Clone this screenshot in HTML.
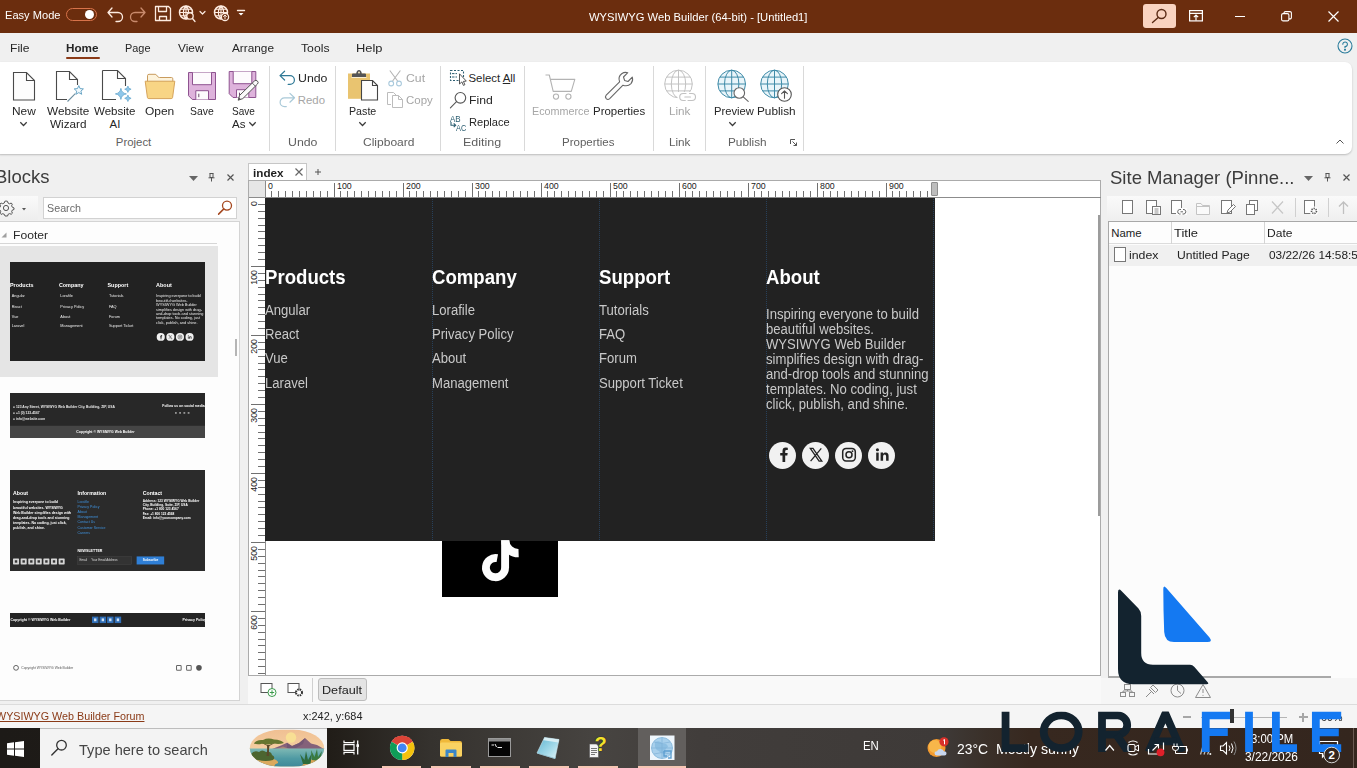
<!DOCTYPE html>
<html><head><meta charset="utf-8"><title>WYSIWYG Web Builder</title>
<style>
*{box-sizing:border-box;margin:0;padding:0}
html,body{width:1357px;height:768px;overflow:hidden;background:#f0f0f0;font-family:"Liberation Sans",sans-serif;font-size:12px;color:#222}
.a{position:absolute}
.t{position:absolute;white-space:nowrap;line-height:normal;transform-origin:0 50%}
svg{position:absolute;overflow:visible}
.ft{position:absolute;white-space:nowrap;line-height:normal;transform-origin:0 50%}

</style></head><body>
<div class="a" style="left:0px;top:0px;width:1357px;height:33px;background:#6b2d0e;"></div>
<span class="t" style="left:5.20px;top:9.38px;font-size:11.4px;color:#fff;transform:scaleX(0.9736);">Easy Mode</span>
<div class="a" style="left:66px;top:8px;width:31px;height:13px;border:1px solid #d8734a;border-radius:7px;"></div>
<div class="a" style="left:85px;top:10px;width:9px;height:9px;background:#fff;border-radius:5px;"></div>
<svg style="left:104px;top:3px" width="150" height="24" viewBox="0 0 150 24" fill="none" stroke="#fdebe0" stroke-width="1.3" stroke-linecap="round" stroke-linejoin="round">
<path d="M8 5 L4 9.5 L8 14 M4 9.5 H14 A4.5 4.5 0 0 1 14 18.5 H12"/>
<path d="M37 5 L41 9.5 L37 14 M41 9.5 H31 A4.5 4.5 0 0 0 31 18.5 H33" stroke="#c98b6d"/>
<path d="M51.5 3.5 H64.5 L66.5 5.5 V17.5 H51.5 Z M54.5 3.5 V8.5 H62.5 V3.5 M55.5 17.5 V13.5 H62.5 V17.5"/>
<circle cx="82" cy="9.5" r="6.5" stroke-width="1.5"/><path d="M75.5 9.5 H88.5 M76.5 6.3 H87.5 M76.5 12.7 H87.5 M82 3 V16 M82 3 C78.5 6 78.5 13 82 16 M82 3 C85.5 6 85.5 13 82 16" stroke-width="1.1"/>
<circle cx="86" cy="13" r="3.2" fill="#6b2d0e"/><path d="M88.5 15.5 L91 18.5"/>
<path d="M96 8.5 L98.5 11 L101 8.5" stroke-width="1.2"/>
<circle cx="117" cy="9.5" r="6.5" stroke-width="1.5"/><path d="M110.5 9.5 H123.5 M111.5 6.3 H122.5 M111.5 12.7 H122.5 M117 3 V16 M117 3 C113.5 6 113.5 13 117 16 M117 3 C120.5 6 120.5 13 117 16" stroke-width="1.1"/>
<circle cx="121" cy="14" r="3.6" fill="#6b2d0e"/><path d="M121 16 V12.2 M119.5 13.5 L121 12 L122.5 13.5" stroke-width="1"/>
<path d="M133.5 7.5 H140.5" stroke-width="1.4"/><path d="M134.5 10 L137 12.5 L139.5 10 Z" fill="#fff" stroke="none"/>
</svg>
<span class="t" style="left:589.20px;top:11.38px;font-size:11.4px;color:#fff;transform:scaleX(0.9842);">WYSIWYG Web Builder (64-bit) - [Untitled1]</span>
<div class="a" style="left:1143px;top:4px;width:33px;height:24px;background:#f9d3c0;border-radius:3px;"></div>
<svg style="left:1143px;top:4px" width="33" height="24" viewBox="0 0 33 24" fill="none" stroke="#5a2a14" stroke-width="1.4" stroke-linecap="round"><circle cx="18.5" cy="10" r="4.5"/><path d="M15.2 13.5 L9.5 18.5"/></svg>
<svg style="left:1189px;top:10px" width="14" height="12" viewBox="0 0 14 12" fill="none" stroke="#fff" stroke-width="1.2"><rect x="0.6" y="0.6" width="12.8" height="10.3"/><path d="M0.6 3.3 H13.4 M7 10.5 V5.2 M4.8 7.2 L7 5 L9.2 7.2"/></svg>
<div class="a" style="left:1235px;top:16px;width:10px;height:1px;background:#fff;"></div>
<svg style="left:1281px;top:11px" width="11" height="11" viewBox="0 0 11 11" fill="none" stroke="#fff" stroke-width="1.1"><rect x="0.6" y="2.6" width="7.3" height="7.3" rx="1.5"/><path d="M3 2.6 V2 A1.4 1.4 0 0 1 4.4 0.6 H9 A1.4 1.4 0 0 1 10.4 2 V6.5 A1.4 1.4 0 0 1 9 7.9 H8"/></svg>
<svg style="left:1328px;top:11px" width="11" height="11" viewBox="0 0 11 11" stroke="#fff" stroke-width="1.2"><path d="M0.5 0.5 L10.5 10.5 M10.5 0.5 L0.5 10.5"/></svg>
<div class="a" style="left:0px;top:33px;width:1357px;height:29px;background:#f0f0f0;"></div>
<span class="t" style="left:10.20px;top:42.38px;font-size:11.4px;color:#262626;transform:scaleX(1.0611);">File</span>
<span class="t" style="left:66.20px;top:42.38px;font-size:11.4px;color:#262626;font-weight:bold;transform:scaleX(1.0261);">Home</span>
<span class="t" style="left:125.20px;top:42.38px;font-size:11.4px;color:#262626;transform:scaleX(0.9576);">Page</span>
<span class="t" style="left:178.20px;top:42.38px;font-size:11.4px;color:#262626;transform:scaleX(1.0407);">View</span>
<span class="t" style="left:231.70px;top:42.38px;font-size:11.4px;color:#262626;transform:scaleX(1.0358);">Arrange</span>
<span class="t" style="left:301.20px;top:42.38px;font-size:11.4px;color:#262626;transform:scaleX(1.0710);">Tools</span>
<span class="t" style="left:356.20px;top:42.38px;font-size:11.4px;color:#262626;transform:scaleX(1.1299);">Help</span>
<div class="a" style="left:66px;top:57px;width:34px;height:2px;background:#8a3a17;border-radius:1px;"></div>
<svg style="left:1337px;top:38px" width="16" height="16" viewBox="0 0 16 16" fill="none" stroke="#2b7d9c" stroke-width="1.1"><circle cx="8" cy="8" r="7"/><path d="M5.8 6.3 A2.3 2.3 0 1 1 8 8.6 V9.8" stroke-linecap="round"/><circle cx="8" cy="11.8" r="0.5" fill="#2b7d9c"/></svg>
<div class="a" style="left:-6px;top:62px;width:1358px;height:92px;background:#fff;border-radius:7px;box-shadow:0 1px 2px rgba(0,0,0,.22);"></div>
<div class="a" style="left:269px;top:66px;width:1px;height:85px;background:#d9d9d9;"></div>
<div class="a" style="left:335px;top:66px;width:1px;height:85px;background:#d9d9d9;"></div>
<div class="a" style="left:440px;top:66px;width:1px;height:85px;background:#d9d9d9;"></div>
<div class="a" style="left:523.5px;top:66px;width:1px;height:85px;background:#d9d9d9;"></div>
<div class="a" style="left:652.5px;top:66px;width:1px;height:85px;background:#d9d9d9;"></div>
<div class="a" style="left:705px;top:66px;width:1px;height:85px;background:#d9d9d9;"></div>
<div class="a" style="left:802.5px;top:66px;width:1px;height:85px;background:#d9d9d9;"></div>
<span class="t" style="left:11.60px;top:105.08px;font-size:11.4px;color:#262626;transform:scaleX(1.0432);">New</span>
<span class="t" style="left:46.70px;top:105.08px;font-size:11.4px;color:#262626;transform:scaleX(1.0324);">Website</span>
<span class="t" style="left:49.70px;top:118.08px;font-size:11.4px;color:#262626;transform:scaleX(1.0290);">Wizard</span>
<span class="t" style="left:94.20px;top:105.08px;font-size:11.4px;color:#262626;transform:scaleX(1.0129);">Website</span>
<span class="t" style="left:109.60px;top:118.08px;font-size:11.4px;color:#262626;">AI</span>
<span class="t" style="left:144.70px;top:105.08px;font-size:11.4px;color:#262626;transform:scaleX(1.0505);">Open</span>
<span class="t" style="left:189.50px;top:105.08px;font-size:11.4px;color:#262626;transform:scaleX(0.9119);">Save</span>
<span class="t" style="left:232.00px;top:105.08px;font-size:11.4px;color:#262626;transform:scaleX(0.8811);">Save</span>
<span class="t" style="left:232.20px;top:118.08px;font-size:11.4px;color:#262626;transform:scaleX(1.0139);">As</span>
<span class="t" style="left:348.80px;top:105.08px;font-size:11.4px;color:#262626;transform:scaleX(0.9362);">Paste</span>
<span class="t" style="left:531.60px;top:105.08px;font-size:11.4px;color:#a6a6a6;transform:scaleX(0.9460);">Ecommerce</span>
<span class="t" style="left:592.90px;top:105.08px;font-size:11.4px;color:#262626;transform:scaleX(1.0050);">Properties</span>
<span class="t" style="left:668.80px;top:105.08px;font-size:11.4px;color:#a6a6a6;transform:scaleX(1.0275);">Link</span>
<span class="t" style="left:713.60px;top:105.08px;font-size:11.4px;color:#262626;transform:scaleX(0.9844);">Preview</span>
<span class="t" style="left:756.50px;top:105.08px;font-size:11.4px;color:#262626;transform:scaleX(1.0354);">Publish</span>
<span class="t" style="left:297.80px;top:72.08px;font-size:11.4px;color:#262626;transform:scaleX(1.0825);">Undo</span>
<span class="t" style="left:297.80px;top:94.08px;font-size:11.4px;color:#a6a6a6;">Redo</span>
<span class="t" style="left:405.60px;top:72.08px;font-size:11.4px;color:#a6a6a6;transform:scaleX(1.0760);">Cut</span>
<span class="t" style="left:405.60px;top:94.08px;font-size:11.4px;color:#a6a6a6;transform:scaleX(1.0071);">Copy</span>
<span class="t" style="left:468.50px;top:72.08px;font-size:11.4px;color:#262626;">Select <u>A</u>ll</span>
<span class="t" style="left:468.50px;top:94.08px;font-size:11.4px;color:#262626;transform:scaleX(1.0726);">Find</span>
<span class="t" style="left:468.50px;top:115.98px;font-size:11.4px;color:#262626;transform:scaleX(0.9733);">Replace</span>
<span class="t" style="left:115.80px;top:135.98px;font-size:11.4px;color:#5f5f5f;">Project</span>
<span class="t" style="left:287.90px;top:135.98px;font-size:11.4px;color:#5f5f5f;transform:scaleX(1.0825);">Undo</span>
<span class="t" style="left:362.80px;top:135.98px;font-size:11.4px;color:#5f5f5f;transform:scaleX(1.0557);">Clipboard</span>
<span class="t" style="left:463.20px;top:135.98px;font-size:11.4px;color:#5f5f5f;transform:scaleX(1.0958);">Editing</span>
<span class="t" style="left:561.50px;top:135.98px;font-size:11.4px;color:#5f5f5f;transform:scaleX(1.0108);">Properties</span>
<span class="t" style="left:668.80px;top:135.98px;font-size:11.4px;color:#5f5f5f;transform:scaleX(1.0275);">Link</span>
<span class="t" style="left:727.60px;top:135.98px;font-size:11.4px;color:#5f5f5f;transform:scaleX(1.0354);">Publish</span>
<svg style="left:19.5px;top:122px" width="7" height="4" viewBox="0 0 7 4" fill="none" stroke="#3a3a3a" stroke-width="1.25"><path d="M0.3 0.3 L3.5 3.5 L6.7 0.3"/></svg>
<svg style="left:358.9px;top:122px" width="7" height="4" viewBox="0 0 7 4" fill="none" stroke="#3a3a3a" stroke-width="1.25"><path d="M0.3 0.3 L3.5 3.5 L6.7 0.3"/></svg>
<svg style="left:729px;top:122px" width="7" height="4" viewBox="0 0 7 4" fill="none" stroke="#3a3a3a" stroke-width="1.25"><path d="M0.3 0.3 L3.5 3.5 L6.7 0.3"/></svg>
<svg style="left:248.5px;top:122px" width="7" height="4" viewBox="0 0 7 4" fill="none" stroke="#3a3a3a" stroke-width="1.25"><path d="M0.3 0.3 L3.5 3.5 L6.7 0.3"/></svg>
<svg style="left:1336px;top:139px" width="8" height="5" viewBox="0 0 8 5" fill="none" stroke="#555" stroke-width="1"><path d="M0.5 4.5 L4 1 L7.5 4.5"/></svg>
<svg style="left:790px;top:139px" width="7" height="7" viewBox="0 0 7 7" fill="none" stroke="#555" stroke-width="1"><path d="M0.5 5 V0.5 H5 M2.5 2.5 L6.5 6.5 M6.5 3.5 V6.5 H3.5"/></svg>
<svg style="left:0px;top:0px" width="300" height="160" viewBox="0 0 300 160" fill="none" stroke="#4a4a4a" stroke-width="1.1">
<path d="M13.5 72.5 H26.5 L34.5 80.5 V100 H13.5 Z M26.5 72.5 V80.5 H34.5" fill="#fdfdfd"/>
<path d="M67 99.5 H56.5 V71.5 H69.5 L77.5 79.5 V85 M69.5 71.5 V79.5 H77.5" />
<path d="M102.5 70.5 H117.5 L125.5 78.5 V86 M117.5 70.5 V78.5 H125.5 M116 99.5 H102.5 V70.5"/>
</svg>
<svg style="left:0px;top:0px" width="300" height="160" viewBox="0 0 300 160" fill="none">
<path d="M67.5 101.5 L75.3 93.7" stroke="#6f8fa0" stroke-width="1.1"/>
<path d="M78.8 85.6 L80.1 88.6 L83.4 88.9 L80.9 91.1 L81.7 94.3 L78.8 92.6 L75.9 94.3 L76.7 91.1 L74.2 88.9 L77.5 88.6 Z" fill="#f2f9fd" stroke="#6aa6c6" stroke-width="1"/>
<path d="M120.9 88.4 Q121.6 93.2 126.4 93.9 Q121.6 94.6 120.9 99.4 Q120.2 94.6 115.4 93.9 Q120.2 93.2 120.9 88.4 Z" fill="#8fc7ea" stroke="#64a6cc" stroke-width="0.8"/>
<path d="M127.9 86 Q128.3 88.8 131.1 89.2 Q128.3 89.6 127.9 92.4 Q127.5 89.6 124.7 89.2 Q127.5 88.8 127.9 86 Z" fill="#8fc7ea" stroke="#64a6cc" stroke-width="0.7"/>
<path d="M127.9 95.1 Q128.3 97.9 131.1 98.3 Q128.3 98.7 127.9 101.5 Q127.5 98.7 124.7 98.3 Q127.5 97.9 127.9 95.1 Z" fill="#8fc7ea" stroke="#64a6cc" stroke-width="0.7"/>
</svg>
<svg style="left:0px;top:0px" width="300" height="160" viewBox="0 0 300 160" fill="none">
<path d="M147.5 82 V75.7 Q147.5 74.3 149 74.3 H155 Q156 74.3 156.6 75.1 L158 76.9 Q158.5 77.5 159.5 77.5 H171.5 Q172.8 77.5 172.8 78.8 V82 Z" fill="#fdf3dc" stroke="#c99c5e" stroke-width="1"/>
<path d="M145.2 81.2 H174.8 L172.6 97.4 Q172.4 98.6 171.2 98.6 H148.8 Q147.6 98.6 147.4 97.4 Z" fill="#f8d585" stroke="#d6a45c" stroke-width="1"/>
</svg>
<svg style="left:0px;top:0px" width="300" height="160" viewBox="0 0 300 160" fill="none"><path d="M188.5 72.5 H215.5 V99.5 H192.3 L188.5 95.7 Z" fill="#deb3dc" stroke="#8e5390" stroke-width="1"/><path d="M192.5 72.5 V84.7 H211.5 V72.5" fill="#fdfbfd" stroke="#8e5390" stroke-width="1"/><path d="M195.8 99.5 V90.7 H208.5 V99.5" fill="#fdfbfd" stroke="#8e5390" stroke-width="1"/><path d="M198.8 93.7 V97.2" stroke="#6a4a6c" stroke-width="1"/><path d="M229.2 71.5 H255.8 V97.5 H233 L229.2 93.7 Z" fill="#deb3dc" stroke="#8e5390" stroke-width="1"/><path d="M233.2 71.5 V83.7 H251.8 V71.5" fill="#fdfbfd" stroke="#8e5390" stroke-width="1"/><path d="M236.5 97.5 V89.7 H248.8 V97.5" fill="#fdfbfd" stroke="#8e5390" stroke-width="1"/><path d="M239.5 92.7 V96.2" stroke="#6a4a6c" stroke-width="1"/><path d="M238.2 100.2 L239.6 95.4 L254.4 81 Q256 79.6 257.5 81.1 Q258.9 82.6 257.4 84.1 L242.8 98.6 Z" fill="#fbfbfb" stroke="#555" stroke-width="1"/><path d="M252.3 83.1 L255.4 86.2" stroke="#555" stroke-width="0.9"/><path d="M238.2 100.2 L240.9 99.3 L239.1 97.5 Z" fill="#555"/></svg>
<svg style="left:0px;top:0px" width="700" height="160" viewBox="0 0 700 160" fill="none" stroke-width="1.2" stroke-linecap="round" stroke-linejoin="round">
<path d="M284.6 71.2 L280 75.6 L284.6 80 M280.3 75.6 H290 A4.4 4.4 0 0 1 290 84.4 H288.2" stroke="#2f7996"/>
<path d="M289.9 93.4 L294.5 97.8 L289.9 102.2 M294.2 97.8 H284.5 A4.4 4.4 0 0 0 284.5 106.6 H286.3" stroke="#a9c9d8"/>
</svg>
<svg style="left:0px;top:0px" width="700" height="160" viewBox="0 0 700 160" fill="none">
<rect x="348" y="73.5" width="22" height="25.3" fill="#e9c470"/>
<path d="M352 77 V74.6 Q352 73.6 353 73.6 H356.2 Q356.6 70 359 70 Q361.4 70 361.8 73.6 H365 Q366 73.6 366 74.6 V77 Z" fill="#555"/><circle cx="359" cy="72.6" r="1" fill="#f5e6c0"/>
<rect x="351.5" y="77" width="15" height="1" fill="#f7ecd2"/>
<path d="M361.5 80.5 H372.5 L377.5 85.5 V100 H361.5 Z" fill="#fdfdfd" stroke="#444" stroke-width="1.1"/><path d="M372.5 80.5 V85.5 H377.5" fill="none" stroke="#444" stroke-width="1.1"/>
</svg>
<svg style="left:0px;top:0px" width="700" height="160" viewBox="0 0 700 160" fill="none">
<path d="M389.8 70.5 L397.6 81 M400.4 70.5 L392.6 81" stroke="#b4b4b4" stroke-width="1.1"/>
<circle cx="391.2" cy="83.5" r="2.4" stroke="#a9c9dc" stroke-width="1.1"/><circle cx="399" cy="83.5" r="2.4" stroke="#a9c9dc" stroke-width="1.1"/>
<path d="M391 104.5 H387.5 V92.5 H393.5 L396 95" stroke="#bcbcbc" stroke-width="1"/>
<path d="M392.5 95.5 H398.5 L402.5 99.5 V107.5 H392.5 Z M398.5 95.5 V99.5 H402.5" stroke="#bcbcbc" stroke-width="1" fill="#fff"/>
</svg>
<svg style="left:0px;top:0px" width="700" height="160" viewBox="0 0 700 160" fill="none">
<rect x="450.5" y="70.5" width="13" height="10" stroke="#2d5f72" stroke-width="1.1" stroke-dasharray="2 1.5"/>
<path d="M452 73.6 H457 M452 77 H457" stroke="#2d5f72" stroke-width="1" stroke-dasharray="2.5 1"/>
<path d="M459.5 73.8 V84 L461.9 81.9 L463.4 85.4 L464.9 84.7 L463.4 81.4 L466.3 81.1 Z" fill="#fff" stroke="#444" stroke-width="0.9" stroke-linejoin="round"/>
<circle cx="460.4" cy="97.8" r="5.3" stroke="#555" stroke-width="1.1"/><path d="M456.5 101.7 L450.4 107.8" stroke="#555" stroke-width="1.1" stroke-linecap="round"/>
<path d="M451 122 V125.2 H455.5 M453.7 123.3 L455.7 125.2 L453.7 127.1" stroke="#2d5f72" stroke-width="1.1"/>
</svg>
<svg style="left:0px;top:0px" width="700" height="160" viewBox="0 0 700 160" fill="none">
<path d="M545.5 75 H549.3 L553.2 91.4 H571.3 L574.8 79.4 H550.4" stroke="#b3b3b3" stroke-width="1.1" stroke-linejoin="round"/>
<circle cx="556" cy="96.6" r="2.6" stroke="#b3b3b3" stroke-width="1.1"/><circle cx="568.4" cy="96.6" r="2.6" stroke="#b3b3b3" stroke-width="1.1"/>
<path d="M606.2 95.2 L619.6 81.8 Q617.7 76.7 621.7 73.7 Q624.5 71.7 627.8 72.7 L623.5 77 L624.6 80.4 L628 81.5 L632.3 77.2 Q633.4 80.8 631 83.6 Q627.8 86.9 623 85.2 L609.7 98.7 Q607.9 100.3 606.2 98.6 Q604.7 96.9 606.2 95.2 Z" stroke="#666" stroke-width="1.1" stroke-linejoin="round" fill="#fdfdfd"/>
</svg>
<svg style="left:0px;top:0px" width="900" height="160" viewBox="0 0 900 160" fill="none" stroke-width="1"><circle cx="678.5" cy="84" r="13.8" fill="#fff" stroke="#c2c2c2"/><path d="M678.5 70.2 V97.8 M664.7 84 H692.3 M666.494 77.1 H690.506 M666.494 90.9 H690.506" stroke="#c2c2c2"/><ellipse cx="678.5" cy="84" rx="7.176" ry="13.8" stroke="#c2c2c2"/><rect x="677.5" y="92" width="19.5" height="10" fill="#fff" stroke="none"/><path d="M686 93.5 H683.2 A3.5 3.5 0 0 0 683.2 100.5 H685.3 M688 100.5 H692 A3.5 3.5 0 0 0 692 93.5 H689.5 M684.8 97 H690.5" stroke="#c2c2c2" stroke-width="1.1" stroke-linecap="round"/><circle cx="731.7" cy="84" r="13.8" fill="#e9f5fa" stroke="#3f8ba8"/><path d="M731.7 70.2 V97.8 M717.9 84 H745.5 M719.694 77.1 H743.706 M719.694 90.9 H743.706" stroke="#3f8ba8"/><ellipse cx="731.7" cy="84" rx="7.176" ry="13.8" stroke="#3f8ba8"/><circle cx="739.3" cy="93" r="5.3" fill="#fff" stroke="#666" stroke-width="1.1"/><path d="M743.2 96.9 L748.2 101.3" stroke="#666" stroke-width="1.1" stroke-linecap="round"/><circle cx="774.5" cy="84" r="13.8" fill="#e9f5fa" stroke="#3f8ba8"/><path d="M774.5 70.2 V97.8 M760.7 84 H788.3 M762.494 77.1 H786.506 M762.494 90.9 H786.506" stroke="#3f8ba8"/><ellipse cx="774.5" cy="84" rx="7.176" ry="13.8" stroke="#3f8ba8"/><circle cx="784.5" cy="94.5" r="6.8" fill="#fff" stroke="#555" stroke-width="1.1"/><path d="M784.5 98.3 V91 M781.6 93.7 L784.5 90.8 L787.4 93.7" stroke="#555" stroke-width="1.1" stroke-linecap="round" stroke-linejoin="round"/></svg>
<span class="t" style="left:449.71px;top:113.90px;font-size:8.4px;color:#2d5f72;transform:scaleX(0.9557);">AB</span>
<span class="t" style="left:456.41px;top:122.90px;font-size:8.4px;color:#2d5f72;transform:scaleX(0.8841);">AC</span>
<span class="t" style="left:-4.83px;top:165.91px;font-size:19px;color:#3c3c3c;transform:scaleX(0.9732);">Blocks</span>
<svg style="left:188.5px;top:176px" width="9" height="5" viewBox="0 0 9 5" fill="none"><path d="M0 0 H9 L4.5 5 Z" fill="#666"/></svg>
<svg style="left:208px;top:173px" width="7" height="9" viewBox="0 0 7 9" fill="none"><path d="M1.5 0.5 H5.5 M2 0.5 V4.5 H5 V0.5 M0.5 4.8 H6.5 M3.5 5 V8.5" stroke="#555" stroke-width="1" fill="none"/></svg>
<svg style="left:227px;top:174px" width="7" height="7" viewBox="0 0 7 7" fill="none"><path d="M0.5 0.5 L6.5 6.5 M6.5 0.5 L0.5 6.5" stroke="#555" stroke-width="1.2"/></svg>
<div class="a" style="left:0px;top:196px;width:38px;height:24px;background:linear-gradient(#fafafa,#eeeeee);"></div>
<svg style="left:-2px;top:200px" width="16" height="16" viewBox="0 0 16 16" fill="none"><circle cx="8" cy="8" r="2.6" stroke="#555" fill="none"/><path d="M8 1 L9.5 1.3 L10 3 L11.6 3.8 L13.2 3 L14.3 4.2 L13.6 5.8 L14.4 7.3 L16 7.9 L16 9.5 L14.3 10.1 L13.7 11.6 L14.4 13.2 L13.2 14.3 L11.7 13.6 L10.1 14.3 L9.6 16 H7 L6.3 14.3 L4.7 13.7 L3.1 14.4 L2 13.2 L2.7 11.6 L2 10 L0.3 9.5 V7.9 L2 7.3 L2.6 5.7 L1.9 4.2 L3.1 3 L4.7 3.7 L6.3 3 L6.8 1.3 Z" stroke="#555" fill="none" stroke-width="1"/></svg>
<svg style="left:21.5px;top:208px" width="4" height="3" viewBox="0 0 4 3" fill="none"><path d="M0 0 H4 L2 2.5 Z" fill="#555"/></svg>
<div class="a" style="left:42.5px;top:197px;width:194px;height:22px;background:#fff;border:1px solid #d2d2d2;"></div>
<span class="t" style="left:46.69px;top:201.00px;font-size:11.6px;color:#6b6b6b;transform:scaleX(0.9258);">Search</span>
<svg style="left:216px;top:199px" width="18" height="18" viewBox="0 0 18 18" fill="none"><circle cx="11" cy="6.6" r="4.5" stroke="#a5481f" stroke-width="1.3" fill="none"/><path d="M7.8 9.9 L2.6 15.1" stroke="#a5481f" stroke-width="1.5" stroke-linecap="round"/></svg>
<div class="a" style="left:-1px;top:221px;width:241px;height:480px;background:#fdfdfd;border:1px solid #d4d4d4;"></div>
<svg style="left:1px;top:232px" width="6" height="6" viewBox="0 0 6 6" fill="none"><path d="M5.5 0.5 V5.5 H0.5 Z" fill="#a0a0a0"/></svg>
<span class="t" style="left:12.59px;top:228.00px;font-size:11.6px;color:#2a2a2a;transform:scaleX(1.0475);">Footer</span>
<div class="a" style="left:0px;top:243px;width:217px;height:1px;background:#d6d6d6;"></div>
<div class="a" style="left:0px;top:246px;width:218px;height:131px;background:#e5e5e5;"></div>
<div class="a" style="left:234.5px;top:339px;width:2px;height:17px;background:#b5b5b5;"></div>
<div class="a" style="left:10px;top:262px;width:195px;height:99px;overflow:hidden;background:#222;filter:blur(0.35px)"><div class="a" style="left:0px;top:-0.4px;width:670px;height:343px;background:#222222;overflow:hidden;transform-origin:0 0;transform:scale(0.29104);"><div class="a" style="left:0px;top:0px;width:670px;height:343px">
<span class="ft" style="left:0.3px;top:69.33px;font-size:19.3px;font-weight:bold;color:#fff;width:80.2px;transform:scaleX(.965)">Products</span>
<span class="ft" style="left:167.8px;top:69.33px;font-size:19.3px;font-weight:bold;color:#fff;width:85px;transform:scaleX(.965)">Company</span>
<span class="ft" style="left:334.6px;top:69.33px;font-size:19.3px;font-weight:bold;color:#fff;width:72px;transform:scaleX(.965)">Support</span>
<span class="ft" style="left:501.6px;top:69.33px;font-size:19.3px;font-weight:bold;color:#fff;width:54px;transform:scaleX(.965)">About</span>
<span class="ft" style="left:5.8px;top:107.01px;font-size:13.8px;color:#ececec;transform:scaleX(.95)">Angular</span>
<span class="ft" style="left:5.8px;top:144.91px;font-size:13.8px;color:#ececec;transform:scaleX(.95)">React</span>
<span class="ft" style="left:5.8px;top:179.41px;font-size:13.8px;color:#ececec;transform:scaleX(.95)">Vue</span>
<span class="ft" style="left:5.8px;top:212.91px;font-size:13.8px;color:#ececec;transform:scaleX(.95)">Laravel</span>
<span class="ft" style="left:173.3px;top:107.01px;font-size:13.8px;color:#ececec;transform:scaleX(.95)">Lorafile</span>
<span class="ft" style="left:173.3px;top:144.91px;font-size:13.8px;color:#ececec;transform:scaleX(.95)">Privacy Policy</span>
<span class="ft" style="left:173.3px;top:179.41px;font-size:13.8px;color:#ececec;transform:scaleX(.95)">About</span>
<span class="ft" style="left:173.3px;top:212.91px;font-size:13.8px;color:#ececec;transform:scaleX(.95)">Management</span>
<span class="ft" style="left:340.1px;top:107.01px;font-size:13.8px;color:#ececec;transform:scaleX(.95)">Tutorials</span>
<span class="ft" style="left:340.1px;top:144.91px;font-size:13.8px;color:#ececec;transform:scaleX(.95)">FAQ</span>
<span class="ft" style="left:340.1px;top:179.41px;font-size:13.8px;color:#ececec;transform:scaleX(.95)">Forum</span>
<span class="ft" style="left:340.1px;top:212.91px;font-size:13.8px;color:#ececec;transform:scaleX(.95)">Support Ticket</span>
<span class="ft" style="left:501.6px;top:109.41px;font-size:13.8px;color:#ececec;transform:scaleX(.95)">Inspiring everyone to build</span>
<span class="ft" style="left:501.6px;top:124.46px;font-size:13.8px;color:#ececec;transform:scaleX(.95)">beautiful websites.</span>
<span class="ft" style="left:501.6px;top:139.51px;font-size:13.8px;color:#ececec;transform:scaleX(.95)">WYSIWYG Web Builder</span>
<span class="ft" style="left:501.6px;top:154.56px;font-size:13.8px;color:#ececec;transform:scaleX(.95)">simplifies design with drag-</span>
<span class="ft" style="left:501.6px;top:169.61px;font-size:13.8px;color:#ececec;transform:scaleX(.95)">and-drop tools and stunning</span>
<span class="ft" style="left:501.6px;top:184.66px;font-size:13.8px;color:#ececec;transform:scaleX(.95)">templates. No coding, just</span>
<span class="ft" style="left:501.6px;top:199.71px;font-size:13.8px;color:#ececec;transform:scaleX(.95)">click, publish, and shine.</span>
<div class="a" style="left:504.4px;top:244.1px;width:27.2px;height:27.2px;border-radius:50%;background:#f1f1f1"></div>
<div class="a" style="left:537.4px;top:244.1px;width:27.2px;height:27.2px;border-radius:50%;background:#f1f1f1"></div>
<div class="a" style="left:570.4px;top:244.1px;width:27.2px;height:27.2px;border-radius:50%;background:#f1f1f1"></div>
<div class="a" style="left:603.4px;top:244.1px;width:27.2px;height:27.2px;border-radius:50%;background:#f1f1f1"></div>
<svg style="left:0;top:0" width="670" height="343" viewBox="0 0 670 343"><path d="M520.2 265 V258.5 H522.3 L522.7 255.9 H520.2 V254.3 Q520.2 253 521.6 253 H522.8 V250.7 Q521.8 250.5 520.8 250.5 Q517.5 250.5 517.5 253.9 V255.9 H515.2 V258.5 H517.5 V265 Z" fill="#222"/><path d="M545.3 251.3 H548 L556.8 264.1 H554.1 Z M556.3 251.3 L545.6 264.1" fill="none" stroke="#222" stroke-width="1.3"/><rect x="577.7" y="251.4" width="12.6" height="12.6" rx="3.4" fill="none" stroke="#222" stroke-width="1.5"/><circle cx="584" cy="257.7" r="3" fill="none" stroke="#222" stroke-width="1.5"/><circle cx="587.5" cy="254.2" r="0.9" fill="#222"/><rect x="611.2" y="255.6" width="2.5" height="8.1" fill="#222"/><circle cx="612.45" cy="252.7" r="1.55" fill="#222"/><path d="M615.6 255.6 H618 V256.8 Q618.9 255.4 620.7 255.4 Q623.6 255.4 623.6 258.9 V263.7 H621.1 V259.4 Q621.1 257.6 619.7 257.6 Q618.1 257.6 618.1 259.5 V263.7 H615.6 Z" fill="#222"/></svg>
</div></div></div>
<div class="a" style="left:10px;top:393px;width:195px;height:45px;overflow:hidden;background:#282828;filter:blur(0.3px)"><div class="a" style="left:0;top:0;width:970px;height:223.881px;transform-origin:0 0;transform:scale(0.201)"><div class="a" style="left:0;top:163px;width:970px;height:62px;background:#454545"></div><span class="ft" style="left:15px;top:58px;font-size:16.5px;color:#e8e8e8;font-weight:bold;">&#9679; 123 Any Street, WYSIWYG Web Builder City, Building, ZIP, USA</span><span class="ft" style="left:15px;top:90px;font-size:16.5px;color:#e8e8e8;font-weight:bold;">&#9679; +1 (0) 123-4567</span><span class="ft" style="left:15px;top:121px;font-size:16.5px;color:#e8e8e8;font-weight:bold;">&#9679; info@website.com</span><span class="ft" style="left:758px;top:54px;font-size:17px;color:#fff;font-weight:bold;">Follow us on social media</span><span class="ft" style="left:820px;top:90px;font-size:18px;color:#9a9a9a;font-weight:bold;">&#9632;&nbsp; &#9632;&nbsp; &#9632;&nbsp; &#9632;</span><span class="ft" style="left:330px;top:184px;font-size:17px;color:#fff;font-weight:bold;">Copyright &copy; WYSIWYG Web Builder</span></div></div>
<div class="a" style="left:10px;top:470.3px;width:195px;height:100.5px;overflow:hidden;background:#2b2b2b;filter:blur(0.3px)"><div class="a" style="left:0;top:0;width:970px;height:500px;transform-origin:0 0;transform:scale(0.201)"><span class="ft" style="left:15px;top:100px;font-size:26px;color:#fff;font-weight:bold;">About</span><span class="ft" style="left:336px;top:100px;font-size:26px;color:#fff;font-weight:bold;">Information</span><span class="ft" style="left:660px;top:100px;font-size:26px;color:#fff;font-weight:bold;">Contact</span><span class="ft" style="left:15px;top:150px;font-size:17.5px;color:#fff;font-weight:bold;">Inspiring everyone to build</span><span class="ft" style="left:15px;top:176px;font-size:17.5px;color:#fff;font-weight:bold;">beautiful websites. WYSIWYG</span><span class="ft" style="left:15px;top:202px;font-size:17.5px;color:#fff;font-weight:bold;">Web Builder simplifies design with</span><span class="ft" style="left:15px;top:228px;font-size:17.5px;color:#fff;font-weight:bold;">drag-and-drop tools and stunning</span><span class="ft" style="left:15px;top:254px;font-size:17.5px;color:#fff;font-weight:bold;">templates. No coding, just click,</span><span class="ft" style="left:15px;top:280px;font-size:17.5px;color:#fff;font-weight:bold;">publish, and shine.</span><span class="ft" style="left:336px;top:148px;font-size:17.5px;color:#3f93df;">Lorafile</span><span class="ft" style="left:336px;top:173.5px;font-size:17.5px;color:#3f93df;">Privacy Policy</span><span class="ft" style="left:336px;top:199px;font-size:17.5px;color:#3f93df;">About</span><span class="ft" style="left:336px;top:224.5px;font-size:17.5px;color:#3f93df;">Management</span><span class="ft" style="left:336px;top:250px;font-size:17.5px;color:#3f93df;">Contact Us</span><span class="ft" style="left:336px;top:275.5px;font-size:17.5px;color:#3f93df;">Customer Service</span><span class="ft" style="left:336px;top:301px;font-size:17.5px;color:#3f93df;">Careers</span><span class="ft" style="left:660px;top:146px;font-size:16px;color:#fff;font-weight:bold;">Address: 123 WYSIWYG Web Builder</span><span class="ft" style="left:660px;top:166.5px;font-size:16px;color:#fff;font-weight:bold;">City, Building, Suite, ZIP, USA</span><span class="ft" style="left:660px;top:187px;font-size:16px;color:#fff;font-weight:bold;">Phone: +1 800 123 4567</span><span class="ft" style="left:660px;top:207.5px;font-size:16px;color:#fff;font-weight:bold;">Fax: +1 800 123 4568</span><span class="ft" style="left:660px;top:228px;font-size:16px;color:#fff;font-weight:bold;">Email: info@yourcompany.com</span><span class="ft" style="left:336px;top:392px;font-size:18px;color:#fff;font-weight:bold;">NEWSLETTER</span><div class="a" style="left:15px;top:440px;width:30px;height:30px;background:#d5d5d5;border-radius:3px"></div><div class="a" style="left:24px;top:449px;width:12px;height:12px;background:#333"></div><div class="a" style="left:52.8px;top:440px;width:30px;height:30px;background:#d5d5d5;border-radius:3px"></div><div class="a" style="left:61.8px;top:449px;width:12px;height:12px;background:#333"></div><div class="a" style="left:90.6px;top:440px;width:30px;height:30px;background:#d5d5d5;border-radius:3px"></div><div class="a" style="left:99.6px;top:449px;width:12px;height:12px;background:#333"></div><div class="a" style="left:128.4px;top:440px;width:30px;height:30px;background:#d5d5d5;border-radius:3px"></div><div class="a" style="left:137.4px;top:449px;width:12px;height:12px;background:#333"></div><div class="a" style="left:166.2px;top:440px;width:30px;height:30px;background:#d5d5d5;border-radius:3px"></div><div class="a" style="left:175.2px;top:449px;width:12px;height:12px;background:#333"></div><div class="a" style="left:204px;top:440px;width:30px;height:30px;background:#d5d5d5;border-radius:3px"></div><div class="a" style="left:213px;top:449px;width:12px;height:12px;background:#333"></div><div class="a" style="left:241.8px;top:440px;width:30px;height:30px;background:#d5d5d5;border-radius:3px"></div><div class="a" style="left:250.8px;top:449px;width:12px;height:12px;background:#333"></div><div class="a" style="left:336px;top:430px;width:270px;height:40px;background:#333;border:2px solid #4a4a4a"></div><span class="ft" style="left:346px;top:441px;font-size:15px;color:#ddd;">Email &nbsp; &nbsp; Your Email Address</span><div class="a" style="left:630px;top:430px;width:137px;height:40px;background:#2f7fd6"></div><span class="ft" style="left:660px;top:441px;font-size:16px;color:#fff;font-weight:bold;">Subscribe</span></div></div>
<div class="a" style="left:10px;top:613px;width:195px;height:14px;overflow:hidden;background:#242424;filter:blur(0.3px)"><div class="a" style="left:0;top:0;width:970px;height:69.6517px;transform-origin:0 0;transform:scale(0.201)"><span class="ft" style="left:2px;top:22px;font-size:17.5px;color:#fff;font-weight:bold;">Copyright &copy; WYSIWYG Web Builder</span><div class="a" style="left:408px;top:18px;width:32px;height:32px;background:#2f6db5"></div><div class="a" style="left:418px;top:27px;width:12px;height:14px;background:#cfe0f2"></div><div class="a" style="left:445.5px;top:18px;width:32px;height:32px;background:#2f6db5"></div><div class="a" style="left:455.5px;top:27px;width:12px;height:14px;background:#cfe0f2"></div><div class="a" style="left:483px;top:18px;width:32px;height:32px;background:#2f6db5"></div><div class="a" style="left:493px;top:27px;width:12px;height:14px;background:#cfe0f2"></div><div class="a" style="left:520.5px;top:18px;width:32px;height:32px;background:#2f6db5"></div><div class="a" style="left:530.5px;top:27px;width:12px;height:14px;background:#cfe0f2"></div><span class="ft" style="left:858px;top:25px;font-size:17.5px;color:#fff;font-weight:bold;">Privacy Policy</span></div></div>
<div class="a" style="left:10px;top:662.5px;width:195px;height:10px;overflow:hidden;background:transparent;filter:blur(0.3px)"><div class="a" style="left:0;top:0;width:970px;height:49.7512px;transform-origin:0 0;transform:scale(0.201)"><div class="a" style="left:16px;top:10px;width:28px;height:28px;border:4px solid #444;border-radius:50%"></div><span class="ft" style="left:56px;top:14px;font-size:17px;color:#555;">Copyright WYSIWYG Web Builder</span><div class="a" style="left:826px;top:10px;width:28px;height:28px;border:5px solid #666;border-radius:6px"></div><div class="a" style="left:876px;top:10px;width:28px;height:28px;border:5px solid #666;border-radius:6px"></div><div class="a" style="left:926px;top:10px;width:28px;height:28px;background:#555;border-radius:50%"></div></div></div>
<div class="a" style="left:248px;top:162.5px;width:59px;height:19px;background:#fff;border:1px solid #c6c6c6;border-bottom:none;"></div>
<span class="t" style="left:253.19px;top:166.10px;font-size:11.6px;color:#1e1e1e;font-weight:bold;transform:scaleX(1.0075);">index</span>
<svg style="left:294.5px;top:168px" width="8" height="8" viewBox="0 0 8 8" fill="none"><path d="M0.5 0.5 L7.5 7.5 M7.5 0.5 L0.5 7.5" stroke="#666" stroke-width="1.2"/></svg>
<svg style="left:315px;top:169px" width="6" height="6" viewBox="0 0 6 6" fill="none"><path d="M0 3 H6 M3 0 V6" stroke="#555" stroke-width="1"/></svg>
<div class="a" style="left:248px;top:180px;width:853px;height:496px;background:#fff;border:1px solid #ababab;"></div>
<div class="a" style="left:249px;top:181px;width:16px;height:16.5px;background:#e6e6e6;"></div>
<svg style="left:0px;top:0px" width="1357" height="768" viewBox="0 0 1357 768" fill="none"><path d="M265.0 183 V197 M271.9 191 V197 M278.8 191 V197 M285.7 191 V197 M292.6 191 V197 M299.5 191 V197 M306.4 191 V197 M313.3 191 V197 M320.2 191 V197 M327.1 191 V197 M334.0 183 V197 M340.9 191 V197 M347.8 191 V197 M354.7 191 V197 M361.6 191 V197 M368.5 191 V197 M375.4 191 V197 M382.3 191 V197 M389.2 191 V197 M396.1 191 V197 M403.0 183 V197 M409.9 191 V197 M416.8 191 V197 M423.7 191 V197 M430.6 191 V197 M437.5 191 V197 M444.4 191 V197 M451.3 191 V197 M458.2 191 V197 M465.1 191 V197 M472.0 183 V197 M478.9 191 V197 M485.8 191 V197 M492.7 191 V197 M499.6 191 V197 M506.5 191 V197 M513.4 191 V197 M520.3 191 V197 M527.2 191 V197 M534.1 191 V197 M541.0 183 V197 M547.9 191 V197 M554.8 191 V197 M561.7 191 V197 M568.6 191 V197 M575.5 191 V197 M582.4 191 V197 M589.3 191 V197 M596.2 191 V197 M603.1 191 V197 M610.0 183 V197 M616.9 191 V197 M623.8 191 V197 M630.7 191 V197 M637.6 191 V197 M644.5 191 V197 M651.4 191 V197 M658.3 191 V197 M665.2 191 V197 M672.1 191 V197 M679.0 183 V197 M685.9 191 V197 M692.8 191 V197 M699.7 191 V197 M706.6 191 V197 M713.5 191 V197 M720.4 191 V197 M727.3 191 V197 M734.2 191 V197 M741.1 191 V197 M748.0 183 V197 M754.9 191 V197 M761.8 191 V197 M768.7 191 V197 M775.6 191 V197 M782.5 191 V197 M789.4 191 V197 M796.3 191 V197 M803.2 191 V197 M810.1 191 V197 M817.0 183 V197 M823.9 191 V197 M830.8 191 V197 M837.7 191 V197 M844.6 191 V197 M851.5 191 V197 M858.4 191 V197 M865.3 191 V197 M872.2 191 V197 M879.1 191 V197 M886.0 183 V197 M892.9 191 V197 M899.8 191 V197 M906.7 191 V197 M913.6 191 V197 M920.5 191 V197 M927.4 191 V197 M251 197.4 H265 M258 204.3 H265 M258 211.2 H265 M258 218.1 H265 M258 225.0 H265 M258 231.9 H265 M258 238.8 H265 M258 245.7 H265 M258 252.6 H265 M258 259.5 H265 M251 266.4 H265 M258 273.3 H265 M258 280.2 H265 M258 287.1 H265 M258 294.0 H265 M258 300.9 H265 M258 307.8 H265 M258 314.7 H265 M258 321.6 H265 M258 328.5 H265 M251 335.4 H265 M258 342.3 H265 M258 349.2 H265 M258 356.1 H265 M258 363.0 H265 M258 369.9 H265 M258 376.8 H265 M258 383.7 H265 M258 390.6 H265 M258 397.5 H265 M251 404.4 H265 M258 411.3 H265 M258 418.2 H265 M258 425.1 H265 M258 432.0 H265 M258 438.9 H265 M258 445.8 H265 M258 452.7 H265 M258 459.6 H265 M258 466.5 H265 M251 473.4 H265 M258 480.3 H265 M258 487.2 H265 M258 494.1 H265 M258 501.0 H265 M258 507.9 H265 M258 514.8 H265 M258 521.7 H265 M258 528.6 H265 M258 535.5 H265 M251 542.4 H265 M258 549.3 H265 M258 556.2 H265 M258 563.1 H265 M258 570.0 H265 M258 576.9 H265 M258 583.8 H265 M258 590.7 H265 M258 597.6 H265 M258 604.5 H265 M251 611.4 H265 M258 618.3 H265 M258 625.2 H265 M258 632.1 H265 M258 639.0 H265 M258 645.9 H265 M258 652.8 H265 M258 659.7 H265 M258 666.6 H265 M258 673.5 H265" stroke="#707070" stroke-width="1" fill="none" shape-rendering="crispEdges"/></svg>
<div class="a" style="left:249px;top:197px;width:852px;height:1px;background:#8c8c8c;"></div>
<div class="a" style="left:264.5px;top:181px;width:1px;height:494px;background:#8c8c8c;"></div>
<span class="t" style="left:268.00px;top:180.94px;font-size:8.8px;color:#222;">0</span>
<span class="t" style="left:337.00px;top:180.94px;font-size:8.8px;color:#222;">100</span>
<span class="t" style="left:406.00px;top:180.94px;font-size:8.8px;color:#222;">200</span>
<span class="t" style="left:475.00px;top:180.94px;font-size:8.8px;color:#222;">300</span>
<span class="t" style="left:544.00px;top:180.94px;font-size:8.8px;color:#222;">400</span>
<span class="t" style="left:613.00px;top:180.94px;font-size:8.8px;color:#222;">500</span>
<span class="t" style="left:682.00px;top:180.94px;font-size:8.8px;color:#222;">600</span>
<span class="t" style="left:751.00px;top:180.94px;font-size:8.8px;color:#222;">700</span>
<span class="t" style="left:820.00px;top:180.94px;font-size:8.8px;color:#222;">800</span>
<span class="t" style="left:889.00px;top:180.94px;font-size:8.8px;color:#222;">900</span>
<span class="t" style="left:248.5px;top:201px;font-size:8.8px;color:#222;transform-origin:0 0;transform:rotate(-90deg) translate(-100%,0)">0</span>
<span class="t" style="left:248.5px;top:270px;font-size:8.8px;color:#222;transform-origin:0 0;transform:rotate(-90deg) translate(-100%,0)">100</span>
<span class="t" style="left:248.5px;top:339px;font-size:8.8px;color:#222;transform-origin:0 0;transform:rotate(-90deg) translate(-100%,0)">200</span>
<span class="t" style="left:248.5px;top:408px;font-size:8.8px;color:#222;transform-origin:0 0;transform:rotate(-90deg) translate(-100%,0)">300</span>
<span class="t" style="left:248.5px;top:477px;font-size:8.8px;color:#222;transform-origin:0 0;transform:rotate(-90deg) translate(-100%,0)">400</span>
<span class="t" style="left:248.5px;top:546px;font-size:8.8px;color:#222;transform-origin:0 0;transform:rotate(-90deg) translate(-100%,0)">500</span>
<span class="t" style="left:248.5px;top:615px;font-size:8.8px;color:#222;transform-origin:0 0;transform:rotate(-90deg) translate(-100%,0)">600</span>
<div class="a" style="left:265px;top:198px;width:670px;height:343px;background:#222222;overflow:hidden;transform-origin:0 0;"><div class="a" style="left:-0.4px;top:-0.6px;width:670px;height:343px">
<div class="a" style="left:167.3px;top:0;width:0;height:343px;border-left:1px dotted #27405a"></div>
<div class="a" style="left:334.1px;top:0;width:0;height:343px;border-left:1px dotted #27405a"></div>
<div class="a" style="left:501.1px;top:0;width:0;height:343px;border-left:1px dotted #27405a"></div>
<div class="a" style="left:668.5px;top:0;width:0;height:343px;border-left:1px dotted #27405a"></div>
<span class="ft" style="left:0.3px;top:69.33px;font-size:19.3px;font-weight:bold;color:#fff;width:80.2px;transform:scaleX(.965)">Products</span>
<span class="ft" style="left:167.8px;top:69.33px;font-size:19.3px;font-weight:bold;color:#fff;width:85px;transform:scaleX(.965)">Company</span>
<span class="ft" style="left:334.6px;top:69.33px;font-size:19.3px;font-weight:bold;color:#fff;width:72px;transform:scaleX(.965)">Support</span>
<span class="ft" style="left:501.6px;top:69.33px;font-size:19.3px;font-weight:bold;color:#fff;width:54px;transform:scaleX(.965)">About</span>
<span class="ft" style="left:0.3px;top:105.81px;font-size:13.8px;color:#c9c9c9;transform:scaleX(.95)">Angular</span>
<span class="ft" style="left:0.3px;top:129.51px;font-size:13.8px;color:#c9c9c9;transform:scaleX(.95)">React</span>
<span class="ft" style="left:0.3px;top:153.71px;font-size:13.8px;color:#c9c9c9;transform:scaleX(.95)">Vue</span>
<span class="ft" style="left:0.3px;top:178.51px;font-size:13.8px;color:#c9c9c9;transform:scaleX(.95)">Laravel</span>
<span class="ft" style="left:167.8px;top:105.81px;font-size:13.8px;color:#c9c9c9;transform:scaleX(.95)">Lorafile</span>
<span class="ft" style="left:167.8px;top:129.51px;font-size:13.8px;color:#c9c9c9;transform:scaleX(.95)">Privacy Policy</span>
<span class="ft" style="left:167.8px;top:153.71px;font-size:13.8px;color:#c9c9c9;transform:scaleX(.95)">About</span>
<span class="ft" style="left:167.8px;top:178.51px;font-size:13.8px;color:#c9c9c9;transform:scaleX(.95)">Management</span>
<span class="ft" style="left:334.6px;top:105.81px;font-size:13.8px;color:#c9c9c9;transform:scaleX(.95)">Tutorials</span>
<span class="ft" style="left:334.6px;top:129.51px;font-size:13.8px;color:#c9c9c9;transform:scaleX(.95)">FAQ</span>
<span class="ft" style="left:334.6px;top:153.71px;font-size:13.8px;color:#c9c9c9;transform:scaleX(.95)">Forum</span>
<span class="ft" style="left:334.6px;top:178.51px;font-size:13.8px;color:#c9c9c9;transform:scaleX(.95)">Support Ticket</span>
<span class="ft" style="left:501.6px;top:109.41px;font-size:13.8px;color:#c9c9c9;transform:scaleX(.95)">Inspiring everyone to build</span>
<span class="ft" style="left:501.6px;top:124.46px;font-size:13.8px;color:#c9c9c9;transform:scaleX(.95)">beautiful websites.</span>
<span class="ft" style="left:501.6px;top:139.51px;font-size:13.8px;color:#c9c9c9;transform:scaleX(.95)">WYSIWYG Web Builder</span>
<span class="ft" style="left:501.6px;top:154.56px;font-size:13.8px;color:#c9c9c9;transform:scaleX(.95)">simplifies design with drag-</span>
<span class="ft" style="left:501.6px;top:169.61px;font-size:13.8px;color:#c9c9c9;transform:scaleX(.95)">and-drop tools and stunning</span>
<span class="ft" style="left:501.6px;top:184.66px;font-size:13.8px;color:#c9c9c9;transform:scaleX(.95)">templates. No coding, just</span>
<span class="ft" style="left:501.6px;top:199.71px;font-size:13.8px;color:#c9c9c9;transform:scaleX(.95)">click, publish, and shine.</span>
<div class="a" style="left:504.4px;top:244.1px;width:27.2px;height:27.2px;border-radius:50%;background:#f1f1f1"></div>
<div class="a" style="left:537.4px;top:244.1px;width:27.2px;height:27.2px;border-radius:50%;background:#f1f1f1"></div>
<div class="a" style="left:570.4px;top:244.1px;width:27.2px;height:27.2px;border-radius:50%;background:#f1f1f1"></div>
<div class="a" style="left:603.4px;top:244.1px;width:27.2px;height:27.2px;border-radius:50%;background:#f1f1f1"></div>
<svg style="left:0;top:0" width="670" height="343" viewBox="0 0 670 343"><path d="M520.2 265 V258.5 H522.3 L522.7 255.9 H520.2 V254.3 Q520.2 253 521.6 253 H522.8 V250.7 Q521.8 250.5 520.8 250.5 Q517.5 250.5 517.5 253.9 V255.9 H515.2 V258.5 H517.5 V265 Z" fill="#222"/><path d="M545.3 251.3 H548 L556.8 264.1 H554.1 Z M556.3 251.3 L545.6 264.1" fill="none" stroke="#222" stroke-width="1.3"/><rect x="577.7" y="251.4" width="12.6" height="12.6" rx="3.4" fill="none" stroke="#222" stroke-width="1.5"/><circle cx="584" cy="257.7" r="3" fill="none" stroke="#222" stroke-width="1.5"/><circle cx="587.5" cy="254.2" r="0.9" fill="#222"/><rect x="611.2" y="255.6" width="2.5" height="8.1" fill="#222"/><circle cx="612.45" cy="252.7" r="1.55" fill="#222"/><path d="M615.6 255.6 H618 V256.8 Q618.9 255.4 620.7 255.4 Q623.6 255.4 623.6 258.9 V263.7 H621.1 V259.4 Q621.1 257.6 619.7 257.6 Q618.1 257.6 618.1 259.5 V263.7 H615.6 Z" fill="#222"/></svg>
</div></div>
<div class="a" style="left:442px;top:541px;width:115.5px;height:55.6px;background:#000;"></div>
<svg style="left:0px;top:0px" width="1357" height="768" viewBox="0 0 1357 768" fill="none"><path d="M505.1 540.3 V568" stroke="#fdfdfd" stroke-width="7.9" fill="none"/><path d="M505.1 567.7 A9.6 9.6 0 1 1 497.3 558.2" stroke="#fdfdfd" stroke-width="7.8" fill="none"/><path d="M505.3 540.3 A12.9 12.9 0 0 0 518.6 553.2" stroke="#fdfdfd" stroke-width="8.2" fill="none"/></svg>
<div class="a" style="left:931px;top:182px;width:6.5px;height:14px;background:#bdbdbd;border:1px solid #8f8f8f;border-radius:1px;"></div>
<div class="a" style="left:1097.5px;top:215px;width:2px;height:301px;background:#9c9c9c;"></div>
<div class="a" style="left:248px;top:676px;width:853px;height:28px;background:#f9f9f9;"></div>
<svg style="left:260px;top:682px" width="18" height="16" viewBox="0 0 18 16" fill="none"><rect x="1" y="1.5" width="11" height="9" stroke="#555" fill="#fff" stroke-width="1"/><circle cx="12" cy="10.5" r="4" fill="#fff" stroke="#3a9a4a" stroke-width="1"/><path d="M12 8.3 V12.7 M9.8 10.5 H14.2" stroke="#3a9a4a" stroke-width="1"/></svg>
<svg style="left:287px;top:682px" width="18" height="16" viewBox="0 0 18 16" fill="none"><rect x="1" y="1.5" width="11" height="9" stroke="#555" fill="#fff" stroke-width="1"/><circle cx="12" cy="10.5" r="3" fill="#fff" stroke="#333" stroke-width="2" stroke-dasharray="1.5 0.900000"/></svg>
<div class="a" style="left:311.5px;top:678px;width:1px;height:24px;background:#d0d0d0;"></div>
<div class="a" style="left:317.5px;top:678px;width:49px;height:23px;background:#e4e4e4;border:1px solid #bdbdbd;border-radius:3px;"></div>
<span class="t" style="left:321.69px;top:683.20px;font-size:11.6px;color:#222;transform:scaleX(1.0891);">Default</span>
<span class="t" style="left:1110.17px;top:166.50px;font-size:19px;color:#3c3c3c;transform:scaleX(0.9758);">Site Manager (Pinne...</span>
<svg style="left:1303.5px;top:176px" width="9" height="5" viewBox="0 0 9 5" fill="none"><path d="M0 0 H9 L4.5 5 Z" fill="#666"/></svg>
<svg style="left:1324px;top:173px" width="7" height="9" viewBox="0 0 7 9" fill="none"><path d="M1.5 0.5 H5.5 M2 0.5 V4.5 H5 V0.5 M0.5 4.8 H6.5 M3.5 5 V8.5" stroke="#555" stroke-width="1" fill="none"/></svg>
<svg style="left:1342.5px;top:174px" width="7" height="7" viewBox="0 0 7 7" fill="none"><path d="M0.5 0.5 L6.5 6.5 M6.5 0.5 L0.5 6.5" stroke="#555" stroke-width="1.2"/></svg>
<div class="a" style="left:1107px;top:196px;width:250px;height:24px;background:linear-gradient(#fafafa,#efefef);"></div>
<svg style="left:0px;top:0px" width="1357" height="768" viewBox="0 0 1357 768" fill="none"><rect x="1122.5" y="200.5" width="10" height="13" fill="#fff" stroke="#777" stroke-width="1"/><rect x="1146.5" y="200.5" width="10" height="13" fill="#fff" stroke="#777" stroke-width="1"/><rect x="1152.5" y="206.5" width="8" height="8" fill="#fff" stroke="#777"/><path d="M1154.5 209 H1158.5 M1154.5 211 H1158.5 M1154.5 213 H1158.5" stroke="#777" stroke-width="0.8"/><rect x="1171.5" y="200.5" width="10" height="13" fill="#fff" stroke="#777" stroke-width="1"/><rect x="1176" y="208" width="11" height="7" fill="#fdfdfd" stroke="none"/><path d="M1181 209.5 H1179.5 A2.3 2.3 0 0 0 1179.5 214 H1180.5 M1182.5 214 H1184 A2.3 2.3 0 0 0 1184 209.5 H1183 M1180.5 211.8 H1183" stroke="#666" stroke-width="1" fill="none"/><path d="M1196.5 203.5 H1201 L1202.5 205.5 H1209.5 V214.5 H1196.5 Z M1196.5 206.5 H1209.5" fill="#fafafa" stroke="#c4c4c4" stroke-width="1"/><rect x="1221.5" y="200.5" width="10" height="13" fill="#fff" stroke="#777" stroke-width="1"/><path d="M1227 213 L1228 210 L1233.5 204.5 L1235.5 206.5 L1230 212 Z" fill="#fff" stroke="#666" stroke-width="0.9"/><rect x="1249.5" y="200.5" width="8" height="10" fill="#fff" stroke="#777"/><rect x="1246.5" y="204.5" width="8" height="10" fill="#fff" stroke="#777"/><path d="M1272 201.5 L1283 213.5 M1283 201.5 L1272 213.5" stroke="#c6c6c6" stroke-width="1.2"/><path d="M1295.5 198 V217" stroke="#d0d0d0"/><rect x="1304.5" y="200.5" width="10" height="13" fill="#fff" stroke="#777" stroke-width="1"/><circle cx="1314" cy="211" r="4.5" fill="#fdfdfd" stroke="none"/><circle cx="1314" cy="211" r="2.5" fill="none" stroke="#555" stroke-width="1.6" stroke-dasharray="1.3 0.9"/><path d="M1328.5 198 V217" stroke="#d0d0d0"/><path d="M1343.5 214 V202 M1339 206.5 L1343.5 202 L1348 206.5" stroke="#c0c0c0" stroke-width="1.3" fill="none"/></svg>
<div class="a" style="left:1107.5px;top:221px;width:252px;height:457px;background:#fcfcfc;border:1px solid #a8a8a8;border-bottom:none;"></div>
<div class="a" style="left:1107.5px;top:676px;width:223px;height:2px;background:#a9a9a9;"></div>
<div class="a" style="left:1108.5px;top:222px;width:250px;height:22px;background:#fdfdfd;border-bottom:1px solid #dcdcdc;"></div>
<div class="a" style="left:1170.5px;top:222px;width:1px;height:22px;background:#d4d4d4;"></div>
<div class="a" style="left:1263.5px;top:222px;width:1px;height:22px;background:#d4d4d4;"></div>
<span class="t" style="left:1111.20px;top:226.88px;font-size:11.4px;color:#222;">Name</span>
<span class="t" style="left:1174.20px;top:226.88px;font-size:11.4px;color:#222;transform:scaleX(1.1361);">Title</span>
<span class="t" style="left:1267.20px;top:226.88px;font-size:11.4px;color:#222;transform:scaleX(1.0590);">Date</span>
<div class="a" style="left:1108.5px;top:244.5px;width:250px;height:21px;background:#f0f0f0;"></div>
<svg style="left:1114px;top:247px" width="12" height="15" viewBox="0 0 12 15" fill="none"><rect x="0.5" y="0.5" width="11" height="14" fill="#fff" stroke="#777"/></svg>
<span class="t" style="left:1129.20px;top:248.88px;font-size:11.4px;color:#222;transform:scaleX(1.0825);">index</span>
<span class="t" style="left:1176.50px;top:248.88px;font-size:11.4px;color:#222;transform:scaleX(1.0642);">Untitled Page</span>
<span class="t" style="left:1269.20px;top:248.88px;font-size:11.4px;color:#222;transform:scaleX(1.0396);">03/22/26 14:58:59</span>
<div class="a" style="left:1101px;top:678px;width:256px;height:26px;background:#f6f6f6;"></div>
<svg style="left:0px;top:0px" width="1357" height="768" viewBox="0 0 1357 768" fill="none"><rect x="1124.5" y="684.5" width="6" height="5" fill="none" stroke="#8c8c8c"/><rect x="1120.5" y="692.5" width="5" height="4" fill="none" stroke="#8c8c8c"/><rect x="1129.5" y="692.5" width="5" height="4" fill="none" stroke="#8c8c8c"/><path d="M1127.5 689.5 V691 M1123 692.5 V691 H1132 V692.5" stroke="#8c8c8c" fill="none"/><path d="M1153 685 L1158 690 L1155.5 692.5 L1150.5 687.5 Z M1151.5 691.5 L1146 697 M1149 689 L1154 694" stroke="#8c8c8c" fill="none" stroke-width="1"/><circle cx="1177.5" cy="690.5" r="6.5" fill="none" stroke="#8c8c8c"/><path d="M1177.5 685.5 V690.5 L1181 693.5" stroke="#8c8c8c" fill="none"/><path d="M1203 684.5 L1210.5 697.5 H1195.5 Z" fill="none" stroke="#8c8c8c"/><path d="M1203 689 V693" stroke="#8c8c8c"/><circle cx="1203" cy="695.3" r="0.6" fill="#999"/></svg>
<div class="a" style="left:0px;top:704px;width:1357px;height:24px;background:#f5f5f5;border-top:1px solid #dcdcdc;"></div>
<span class="t" style="left:-3.80px;top:709.98px;font-size:11.4px;color:#8a3a17;transform:scaleX(0.9433);text-decoration:underline;">WYSIWYG Web Builder Forum</span>
<span class="t" style="left:303.20px;top:709.98px;font-size:11.4px;color:#222;transform:scaleX(0.9584);">x:242, y:684</span>
<div class="a" style="left:1183px;top:716px;width:8px;height:2px;background:#a6a6a6;"></div>
<div class="a" style="left:1201px;top:717px;width:86px;height:1px;background:#b5b5b5;"></div>
<div class="a" style="left:1298.5px;top:716px;width:9px;height:2px;background:#a6a6a6;"></div>
<div class="a" style="left:1302px;top:712.5px;width:2px;height:9px;background:#a6a6a6;"></div>
<span class="t" style="left:1321.23px;top:710.75px;font-size:11px;color:#222;transform:scaleX(0.9727);">69%</span>
<div class="a" style="left:0px;top:728px;width:1357px;height:40px;background:linear-gradient(90deg,#1d1a17 0,#211d18 330px,#35322e 430px,#474441 600px,#413d3b 700px,#3e3a38 940px,#3a3029 985px,#37281f 1030px,#34261e 1357px);"></div>
<svg style="left:6.5px;top:740.5px" width="17" height="16" viewBox="0 0 17 16" fill="none"><path d="M0 2.3 L7 1.3 V7.5 H0 Z M8 1.2 L17 0 V7.5 H8 Z M0 8.5 H7 V14.7 L0 13.7 Z M8 8.5 H17 V16 L8 14.8 Z" fill="#fff"/></svg>
<div class="a" style="left:39.5px;top:728px;width:287.5px;height:40px;background:#f3f3f3;border-top:1px solid #bdbdbd;"></div>
<svg style="left:50px;top:738px" width="18" height="18" viewBox="0 0 18 18" fill="none"><circle cx="11.5" cy="7.2" r="4.8" stroke="#333" stroke-width="1.3" fill="none"/><path d="M8 10.7 L1.8 17" stroke="#333" stroke-width="1.4" stroke-linecap="round"/></svg>
<span class="t" style="left:78.55px;top:741.12px;font-size:15px;color:#454545;transform:scaleX(0.9711);">Type here to search</span>
<svg style="left:0px;top:0px" width="1357" height="768" viewBox="0 0 1357 768" fill="none"><defs><clipPath id="lc"><rect x="249.8" y="729.8" width="74.4" height="36.8" rx="31" ry="18.4"/></clipPath>
<linearGradient id="sky" x1="0" y1="0" x2="0" y2="1"><stop offset="0" stop-color="#f0bf92"/><stop offset="1" stop-color="#f8dcae"/></linearGradient>
<linearGradient id="lake" x1="0" y1="0" x2="0" y2="1"><stop offset="0" stop-color="#7fb9b4"/><stop offset="0.5" stop-color="#4f9aa3"/><stop offset="1" stop-color="#3c8596"/></linearGradient></defs>
<g clip-path="url(#lc)">
<rect x="249" y="729" width="77" height="39" fill="url(#sky)"/>
<circle cx="291" cy="737.5" r="5.2" fill="#f8df94"/>
<path d="M272 749 L281 745.5 L287 742.8 L292 746 L299 743 L305 738 L311 743.5 L317 745 L324 749 Z" fill="#84617a"/>
<path d="M287 742.8 L292 746 L299 743 L305 738 L303 744 L296 748 L287 748 Z" fill="#6d5170" opacity="0.7"/>
<path d="M276 749 L283 746.5 L289 749 Z" fill="#a98377"/>
<rect x="249" y="748.5" width="77" height="20" fill="url(#lake)"/>
<path d="M249 757 Q262 755 270 758 Q279 760 278 763 Q270 766 280 768 H249 Z" fill="#dba95e"/>
<path d="M300 768 Q306 759 318 758 L326 756 V768 Z" fill="#d9a458"/>
<path d="M251 754 Q254 750 259 752 Q262 749 266 752 Q271 751 272 755 Q276 757 273 760 Q266 762 258 760 Q251 760 251 754 Z" fill="#4c6530"/>
<path d="M267 745 Q267.5 750 266.5 756 H269.2 Q268.5 750 269.5 745 Z" fill="#5a4a2a"/>
<path d="M268 746 L262 742.5 M268.5 746 L275 742.5" stroke="#5a4a2a" stroke-width="0.8"/>
<path d="M254 743.5 Q256 739.5 263 740 Q268 737.5 274 739.5 Q281 739.5 284 743 Q279 744.5 274 743.5 Q268 745.5 262 743.8 Q257 745 254 743.5 Z" fill="#66762f"/>
<path d="M303 764 L300 754 L304.5 760 L306 751 L308 760 L312 753 L310.5 764 Z" fill="#2f6b3c"/>
<path d="M312 760 L311 750 L314.5 757 L317 749 L318 757 L322 751 L320 761 Z" fill="#3a7a40"/>
</g></svg>
<svg style="left:342.5px;top:740px" width="17" height="15" viewBox="0 0 17 15" fill="none"><path d="M1 0.6 V2.6 H11 V0.6 M1 14.4 V12.4 H11 V14.4" stroke="#fff" stroke-width="1.2" fill="none"/><rect x="1" y="4.6" width="10" height="5.8" stroke="#fff" stroke-width="1.2" fill="none"/><path d="M14.7 0.6 V14.4" stroke="#fff" stroke-width="1.3"/><rect x="13.4" y="4.3" width="2.6" height="2.6" fill="#fff"/></svg>
<svg style="left:0px;top:0px" width="1357" height="768" viewBox="0 0 1357 768" fill="none"><circle cx="402.2" cy="747.9" r="12.2" fill="#fff"/>
<path d="M402.2 747.9 L391.63 741.8 A12.2 12.2 0 0 1 412.77 741.8 Z" fill="#db4437"/>
<path d="M402.2 747.9 L412.77 741.8 A12.2 12.2 0 0 1 402.2 760.1 Z" fill="#f4c20d"/>
<path d="M402.2 747.9 L402.2 760.1 A12.2 12.2 0 0 1 391.63 741.8 Z" fill="#0f9d58"/>
<path d="M391.63 741.8 A12.2 12.2 0 0 1 412.77 741.8 L402.2 741.8 Z" fill="#db4437"/>
<circle cx="402.2" cy="747.9" r="5.6" fill="#fff"/><circle cx="402.2" cy="747.9" r="4.4" fill="#4285f4"/></svg>
<svg style="left:0px;top:0px" width="1357" height="768" viewBox="0 0 1357 768" fill="none"><path d="M440 741.5 Q440 739 442 739 H448.5 L450.5 741 H460 Q462 741 462 743 V755 Q462 756.5 460.5 756.5 H441.5 Q440 756.5 440 755 Z" fill="#f0b93a"/>
<path d="M440 744 Q440 742.5 441.5 742.5 H460.5 Q462 742.5 462 744 V755 Q462 756.5 460.5 756.5 H441.5 Q440 756.5 440 755 Z" fill="#f9d262"/>
<path d="M445.5 757 V750.5 Q445.5 749.5 446.5 749.5 H455.5 Q456.5 749.5 456.5 750.5 V757 H453.5 V753 H448.5 V757 Z" fill="#3b86c8"/></svg>
<svg style="left:0px;top:0px" width="1357" height="768" viewBox="0 0 1357 768" fill="none"><rect x="488.5" y="738.5" width="22" height="18" fill="#050505" stroke="#9a9a9a"/><rect x="489" y="739" width="21" height="2.5" fill="#8b8b8b"/>
<path d="M491.5 745 H494 M495 744 L496.5 747 M497.5 747.5 H502" stroke="#eee" stroke-width="1"/></svg>
<svg style="left:0px;top:0px" width="1357" height="768" viewBox="0 0 1357 768" fill="none"><defs><linearGradient id="npg" x1="0" y1="0" x2="1" y2="1"><stop offset="0" stop-color="#5fb4d2"/><stop offset="0.6" stop-color="#a6dbea"/><stop offset="1" stop-color="#e4f5f9"/></linearGradient></defs>
<path d="M544.5 737.5 L559 739.5 L555 758.5 L537 753 Z" fill="url(#npg)" stroke="#cfeaf2" stroke-width="0.6"/>
<path d="M544.5 737.5 L559 739.5 L558.3 742.5 L543.6 740.3 Z" fill="#d8eef4"/>
<path d="M537 753 L555 758.5 L555.5 756.5" fill="none" stroke="#8fc3d4" stroke-width="0.8"/></svg>
<svg style="left:0px;top:0px" width="1357" height="768" viewBox="0 0 1357 768" fill="none"><path d="M589.5 744 H596.5 L598.5 746 V757.5 H589.5 Z" fill="#f4f4f4" stroke="#555" stroke-width="0.6"/>
<path d="M591 748.5 H597 M591 750.5 H597 M591 752.5 H597 M591 754.5 H595" stroke="#555" stroke-width="0.8"/></svg>
<span class="t" style="left:594.5px;top:733px;font-size:20px;font-weight:bold;color:#f3e22a;text-shadow:0 0 1px #222,0 0 1px #222">?</span>
<div class="a" style="left:638px;top:728px;width:48px;height:40px;background:#625f5d;"></div>
<svg style="left:0px;top:0px" width="1357" height="768" viewBox="0 0 1357 768" fill="none"><rect x="650" y="735.5" width="24.5" height="24.5" fill="#eef6fc"/>
<circle cx="662" cy="748" r="10.5" fill="#a8d0ec" stroke="#7fb2d8" stroke-width="0.8"/>
<path d="M655 742 Q660 740 663 744 Q667 743 668 747 Q664 749 666 753 Q661 755 659 751 Q654 750 655 742 Z" fill="#8dbfe2"/>
<path d="M662 737.5 V758.5 M651.5 748 H672.5 M654 742 Q662 745 670 742 M654 754 Q662 751 670 754" stroke="#7fb2d8" stroke-width="0.7" fill="none"/>
<path d="M664 751 H671 V758 H668 M664 751 V756 H667" stroke="#5d9fd0" stroke-width="1.4" fill="none"/></svg>
<div class="a" style="left:382.3px;top:766px;width:39.2px;height:2px;background:#f6c6b4;"></div>
<div class="a" style="left:430.8px;top:766px;width:39.8px;height:2px;background:#f6c6b4;"></div>
<div class="a" style="left:480px;top:766px;width:39.7px;height:2px;background:#f6c6b4;"></div>
<div class="a" style="left:529px;top:766px;width:39.8px;height:2px;background:#f6c6b4;"></div>
<div class="a" style="left:578px;top:766px;width:39.9px;height:2px;background:#f6c6b4;"></div>
<div class="a" style="left:638px;top:766px;width:48px;height:2px;background:#f6c6b4;"></div>
<span class="t" style="left:862.73px;top:739.09px;font-size:12.5px;color:#fff;transform:scaleX(0.9108);">EN</span>
<svg style="left:0px;top:0px" width="1357" height="768" viewBox="0 0 1357 768" fill="none"><circle cx="936.5" cy="748" r="9" fill="#f39a2e"/><circle cx="935" cy="746.5" r="6.5" fill="#f7b64a"/>
<path d="M937 755.5 Q934.5 755.5 934.5 753.3 Q934.5 751.3 937 751.2 Q938 748.8 940.8 749 Q943.3 749.2 943.8 751.3 Q946.5 751.3 946.5 753.5 Q946.5 755.5 944.5 755.5 Z" fill="#c7d6ee"/>
<circle cx="944" cy="741.8" r="4.6" fill="#d8302a"/>
<path d="M943.2 740.3 L944.5 739.5 V744.3" stroke="#fff" stroke-width="1" fill="none"/></svg>
<span class="t" style="left:956.95px;top:740.33px;font-size:15px;color:#fff;transform:scaleX(0.9294);">23°C</span>
<span class="t" style="left:995.95px;top:740.33px;font-size:15px;color:#fff;transform:scaleX(0.9475);">Mostly sunny</span>
<svg style="left:0px;top:0px" width="1357" height="768" viewBox="0 0 1357 768" fill="none"><path d="M1200.5 754.5 L1203 746 M1204 754.5 L1206 748.5 M1207.5 754.5 L1209 751" stroke="#bdbdbd" stroke-width="1.3" fill="none"/><circle cx="1210.3" cy="754" r="1" fill="#eee"/>
<path d="M1220.5 746 H1223 L1226.5 742.5 V754 L1223 750.5 H1220.5 Z" stroke="#fff" fill="none" stroke-width="1.1"/><path d="M1229 745.5 Q1231 748.2 1229 751 M1231.5 743.5 Q1234.5 748.2 1231.5 753" stroke="#fff" fill="none" stroke-width="1"/><path d="M1234 741.5 Q1238 748.2 1234 755" stroke="#8a8a8a" fill="none" stroke-width="1"/>
<path d="M1319.5 741.5 H1337.5 V753.5 H1326 L1322.5 757 V753.5 H1319.5 Z" stroke="#fff" fill="none" stroke-width="1.2"/><path d="M1323 745 H1334 M1323 748 H1334" stroke="#fff" stroke-width="1.2"/></svg>
<span class="t" style="left:1251.46px;top:732.44px;font-size:12px;color:#fff;transform:scaleX(0.9431);">3:00 PM</span>
<span class="t" style="left:1245.46px;top:750.14px;font-size:12px;color:#fff;transform:scaleX(0.9919);">3/22/2026</span>
<div class="a" style="left:1353px;top:728px;width:1px;height:40px;background:#6a5a52;"></div>
<svg style="left:0px;top:0px" width="1357" height="768" viewBox="0 0 1357 768" fill="none"><path d="M1118 592.5 Q1118 587.5 1121.5 591 L1138.5 608.5 Q1141.2 611.4 1141.2 616 V653 Q1141.2 664.5 1153 664.8 H1190 Q1192.5 664.8 1194.2 666.8 L1207.5 682 Q1209.5 684.2 1206.5 684.2 H1133 Q1118 684.2 1118 669 Z" fill="#13232f"/>
<path d="M1163.3 589 Q1163.3 584.5 1166.3 588 L1209.5 637.5 Q1213 642 1207.5 642 H1174 Q1164.8 642 1164.2 632 Q1163.3 610 1163.3 589 Z" fill="#1479f2"/></svg>
<svg style="left:0px;top:0px" width="1357" height="768" viewBox="0 0 1357 768" fill="none"><defs><clipPath id="wc"><rect x="990" y="711.4" width="367" height="40.6"/></clipPath></defs><g clip-path="url(#wc)"><path d="M1005.55 711.4 V748.1 H1028.4" stroke="#13232f" stroke-width="7.8" fill="none" stroke-linejoin="miter"/><ellipse cx="1061.2" cy="731.7" rx="17.45" ry="16.4" stroke="#13232f" stroke-width="7.8" fill="none"/><path d="M1102 752 V715.3 H1117.5 A9.7 9.7 0 0 1 1117.5 734.7 H1102" stroke="#13232f" stroke-width="7.8" fill="none" stroke-linejoin="miter"/><path d="M1116.5 734.7 L1128.3 752" stroke="#13232f" stroke-width="7.8" fill="none" stroke-linejoin="miter"/><path d="M1148.6 752 L1165.4 713.6 L1182.2 752" stroke="#13232f" stroke-width="7.8" fill="none" stroke-linejoin="miter"/><path d="M1154.5 741.3 H1176.3" stroke="#13232f" stroke-width="7.8" fill="none" stroke-linejoin="miter"/><path d="M1205.75 752 V715.3 H1230.8" stroke="#1479f2" stroke-width="7.8" fill="none" stroke-linejoin="miter"/><path d="M1205.75 732.2 H1227.8" stroke="#1479f2" stroke-width="7.8" fill="none" stroke-linejoin="miter"/><path d="M1249 711.4 V752" stroke="#1479f2" stroke-width="7.8" fill="none" stroke-linejoin="miter"/><path d="M1275.9 711.4 V748.1 H1297" stroke="#1479f2" stroke-width="7.8" fill="none" stroke-linejoin="miter"/><path d="M1341.2 715.3 H1315.85 V748.1 H1341.2" stroke="#1479f2" stroke-width="7.8" fill="none" stroke-linejoin="miter"/><path d="M1315.85 732.4 H1338.8" stroke="#1479f2" stroke-width="7.8" fill="none" stroke-linejoin="miter"/></g></svg>
<svg style="left:0px;top:0px" width="1357" height="768" viewBox="0 0 1357 768" fill="none"><path d="M1105.5 750.5 L1109.7 745.5 L1113.9 750.5" stroke="#fff" stroke-width="1.2" fill="none"/>
<path d="M1128.5 742.5 Q1133 739.5 1137.5 742.5 M1128.5 753.5 Q1133 756.5 1137.5 753.5" stroke="#fff" stroke-width="1.1" fill="none"/><rect x="1128" y="744.5" width="7" height="7" rx="1.5" stroke="#fff" fill="none" stroke-width="1.1"/><path d="M1135 747 L1138.5 745 V751 L1135 749" stroke="#fff" fill="none" stroke-width="1"/>
<path d="M1148.5 749 V754 H1158" stroke="#fff" stroke-width="1.2" fill="none"/><path d="M1152.5 750.5 L1158.5 744.5 M1154.5 744.5 H1158.5 V748.5" stroke="#fff" stroke-width="1.1" fill="none"/><path d="M1163.5 742.5 V750" stroke="#fff" stroke-width="1.2"/>
<circle cx="1160.5" cy="752.3" r="3.9" fill="#e0202a"/>
<path d="M1174 743.5 V746 M1177 743.5 V746 M1172.5 746.5 H1178.5 V748 Q1178.5 750.5 1175.5 750.5 Q1172.5 750.5 1172.5 748 Z M1175.5 750.5 V753.5" stroke="#fff" stroke-width="1" fill="none"/><path d="M1179.5 746.5 H1186.5 V753.5 H1175.5" stroke="#fff" stroke-width="1.1" fill="none"/><path d="M1187.3 748.5 V751.5" stroke="#fff" stroke-width="1.2"/>
<circle cx="1331.7" cy="755" r="7.8" fill="#34261e" stroke="#d8d8d8" stroke-width="1"/></svg>
<span class="t" style="left:1328.50px;top:749.49px;font-size:11.5px;color:#fff;font-weight:bold;">2</span>
<div class="a" style="left:1229.5px;top:709px;width:4px;height:14px;background:#333;"></div>
</body></html>
